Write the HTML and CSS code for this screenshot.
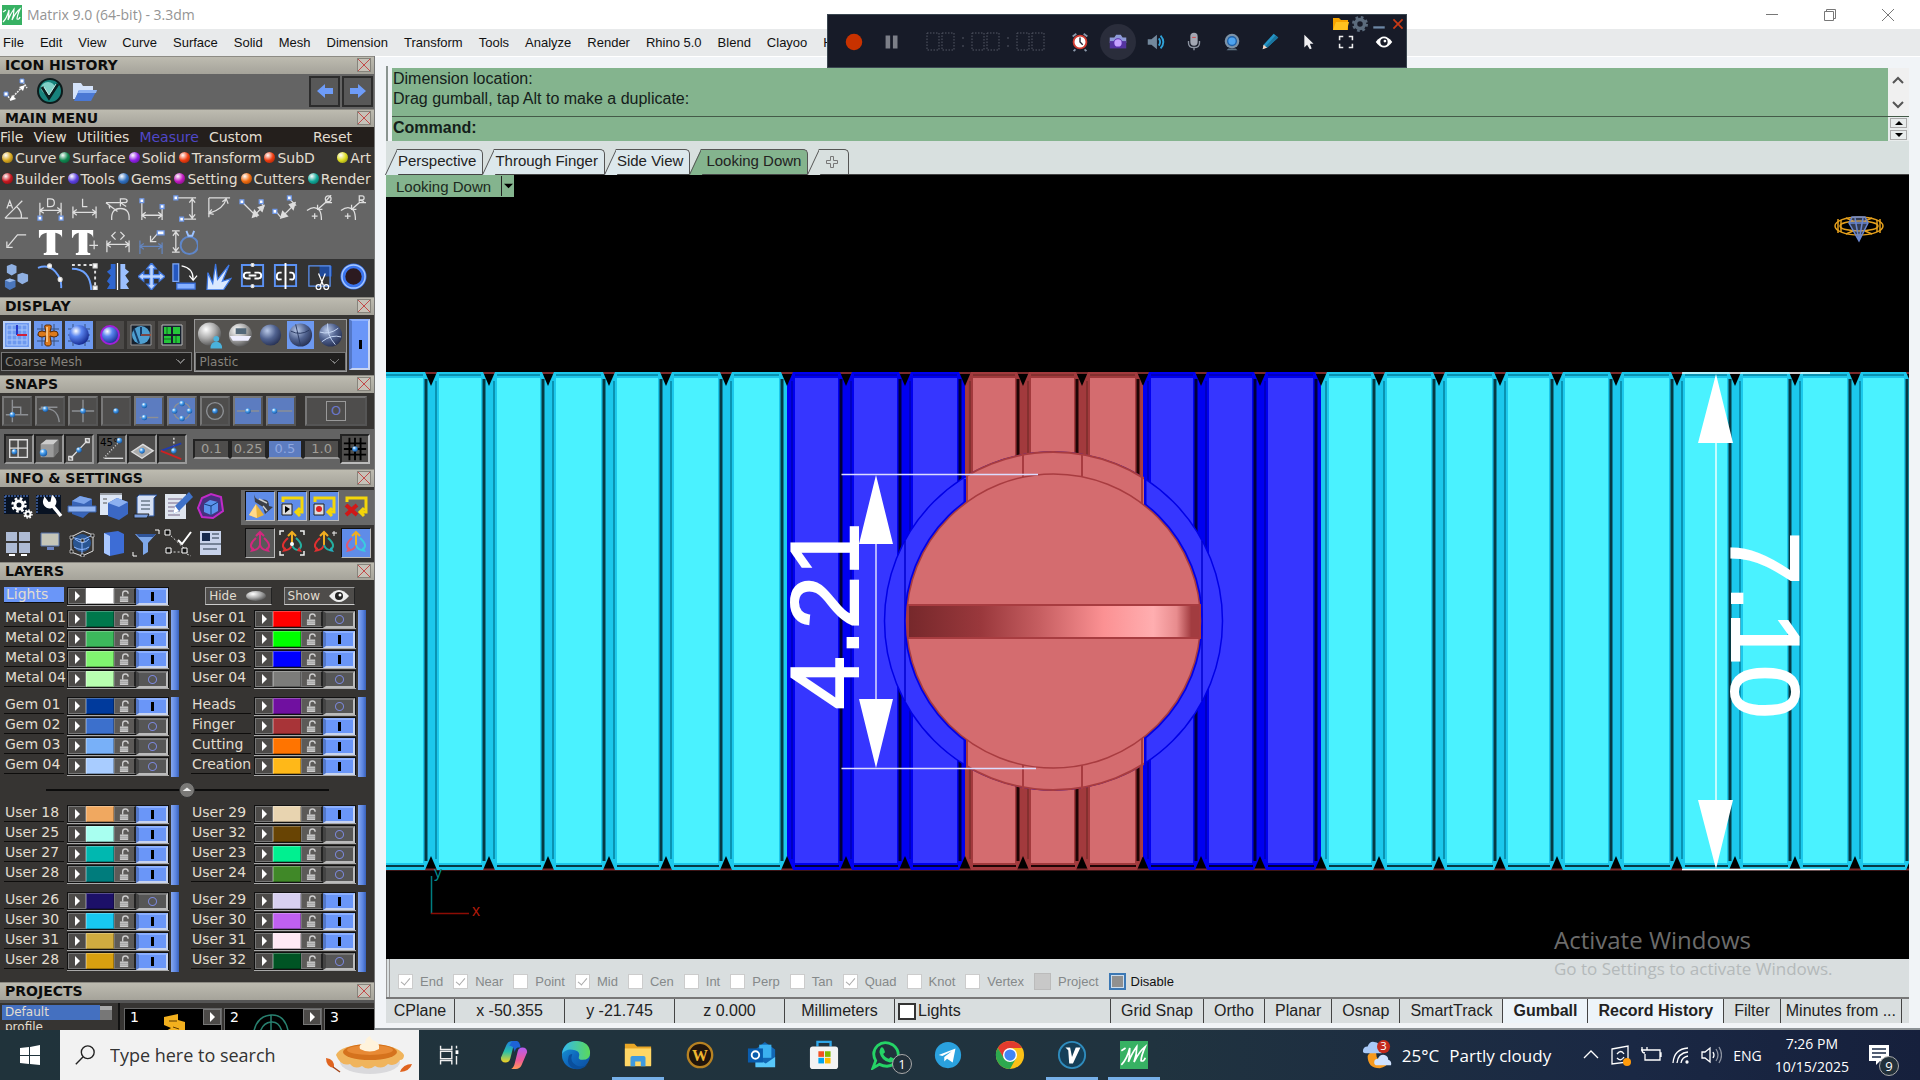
FILE: index.html
```html
<!DOCTYPE html>
<html lang="en">
  <head>
    <meta charset="UTF-8" />
    <meta name="viewport" content="width=device-width, initial-scale=1.0" />
    <title>Matrix 9.0 (64-bit) - 3.3dm</title>

    <link rel="stylesheet" href="styles.css">
  </head>
  <body>
    <!-- shared shapes -->
    <svg class="defs" width="0" height="0" aria-hidden="true">
      <defs>
        <radialGradient id="ballBlue" cx=".35" cy=".3" r=".8"><stop offset="0" stop-color="#fff"/><stop offset=".35" stop-color="#5b86f0"/><stop offset="1" stop-color="#0a1a80"/></radialGradient>
        <radialGradient id="ballSteel" cx=".35" cy=".3" r=".8"><stop offset="0" stop-color="#b9c9e8"/><stop offset=".5" stop-color="#50628f"/><stop offset="1" stop-color="#20294a"/></radialGradient>
        <radialGradient id="ballGray" cx=".35" cy=".3" r=".8"><stop offset="0" stop-color="#fff"/><stop offset=".5" stop-color="#aaa"/><stop offset="1" stop-color="#444"/></radialGradient>
        <radialGradient id="ballSnap" cx=".35" cy=".3" r=".8"><stop offset="0" stop-color="#fff"/><stop offset=".4" stop-color="#4aa0ee"/><stop offset="1" stop-color="#0c4a96"/></radialGradient>
        <linearGradient id="slot">
          <stop offset="0" stop-color="#76282b"/><stop offset=".25" stop-color="#9a383c"/><stop offset=".45" stop-color="#c65e61"/>
          <stop offset=".67" stop-color="#fb9193"/><stop offset=".84" stop-color="#ffaeb0"/><stop offset=".92" stop-color="#e88c8e"/><stop offset=".97" stop-color="#a23c40"/><stop offset="1" stop-color="#a23c40"/>
        </linearGradient>
        <linearGradient id="edgeG" x2="1" y2="1"><stop offset="0" stop-color="#1a9fd8"/><stop offset=".5" stop-color="#0f68bd"/><stop offset="1" stop-color="#0d4f9e"/></linearGradient>
        <linearGradient id="edgeG2" x2="1"><stop offset="0" stop-color="#33b7f0"/><stop offset="1" stop-color="#5bd95a"/></linearGradient>
        <linearGradient id="copA" x2="0" y2="1"><stop offset="0" stop-color="#1c7fe0"/><stop offset=".5" stop-color="#2bc0a8"/><stop offset="1" stop-color="#f5d21f"/></linearGradient>
        <linearGradient id="copB" x2="0" y2="1"><stop offset="0" stop-color="#b35cf0"/><stop offset=".6" stop-color="#ef5a98"/><stop offset="1" stop-color="#ff9a55"/></linearGradient>
        <clipPath id="redZone"><rect x="966" y="376" width="178" height="488"/></clipPath>
        <symbol id="lock" viewBox="0 0 12 14"><path d="M4 7V4q0-3 3-3t3 3" fill="none" stroke="#ccc" stroke-width="1.5"/><path d="M1 7h9v6H1z" fill="#ccc"/><path d="M1 9h9M1 11h9" stroke="#888" stroke-width=".7"/></symbol>
        <symbol id="mlogo" viewBox="0 0 20 20"><path d="M0 0h20v20H0z" fill="#37b163"/><path d="M1 17q4-4 6-12 0 6-1 10 3-7 6-11 0 6-2 11 4-8 8-11-3 7-3 10 2 1 3-2M1 7l3-2" fill="none" stroke="#fff" stroke-width="1.2"/></symbol>
      </defs>
    </svg>

    <header class="titlebar">
      <svg class="logo"><use href="#mlogo"/></svg>
      <span class="title">Matrix 9.0 (64-bit) - 3.3dm</span>
      <div class="win-buttons">
        <button aria-label="Minimize"><svg viewBox="0 0 12 12"><path d="M0 5.5h12"/></svg></button>
        <button aria-label="Restore"><svg viewBox="0 0 12 12"><path d="M.5 2.500h9v9h-9zM2.500 2.500v-2h9v9h-2"/></svg></button>
        <button aria-label="Close"><svg viewBox="0 0 12 12"><path d="m0 0 12 12M12 0 0 12"/></svg></button>
      </div>
    </header>

    <nav class="menubar">
      <button>File</button><button>Edit</button><button>View</button><button>Curve</button><button>Surface</button><button>Solid</button><button>Mesh</button><button>Dimension</button><button>Transform</button><button>Tools</button><button>Analyze</button><button>Render</button><button>Rhino 5.0</button><button>Blend</button><button>Clayoo</button><button>Help</button>
    </nav>

    <!-- screen recorder floating over the window -->
    <div class="recorder">
      <div class="rec-top">
        <svg viewBox="0 0 16 14"><path d="M0 1h6l2 2h7v10H0z" fill="#f5a300"/><path d="M3 5h13l-2 8H0z" fill="#ffc21f"/></svg>
        <svg viewBox="0 0 16 16"><circle cx="8" cy="8" r="4.5" fill="none" stroke="#5b6b7c" stroke-width="3.500"/><circle cx="8" cy="8" r="6.5" fill="none" stroke="#5b6b7c" stroke-width="3" stroke-dasharray="2.600 2.500"/></svg>
        <svg viewBox="0 0 14 14"><path d="M2 10h10" stroke="#6c87a5" stroke-width="2"/></svg>
        <svg viewBox="0 0 14 14"><path d="m3 3 8 8M11 3l-8 8" stroke="#c93a16" stroke-width="1.5"/></svg>
      </div>
      <div class="rec-row">
        <button aria-label="Record"><svg viewBox="0 0 24 24"><circle cx="12" cy="12" r="9" fill="#c83200"/></svg></button>
        <button aria-label="Pause"><svg viewBox="0 0 24 24"><path d="M5 5h5v14H5zM13 5h5v14h-5z" fill="#7c7f88"/></svg></button>
        <svg class="timer" viewBox="0 0 122 20"><path d="M2 1h12v17H2zM17 1h12v17H17zM47 1h12v17H47zM62 1h12v17H62zM92 1h12v17H92zM107 1h12v17h-12z" fill="none" stroke="#555864" stroke-dasharray="1.5 1.5"/><path d="M38 5v2M38 13v2M83 5v2M83 13v2" stroke="#555864"/></svg>
        <button aria-label="Alarm"><svg viewBox="0 0 24 24"><path d="m4 6 4-3M20 6l-4-3M7 20l-2 2M17 20l2 2" stroke="#8c99ab" stroke-width="2"/><circle cx="12" cy="12" r="7" fill="#fff" stroke="#d23b30" stroke-width="2"/><path d="M12 7v5l3 3" fill="none" stroke="#223" stroke-width="1.5"/></svg></button>
        <button class="rec-round" aria-label="Snapshot"><svg viewBox="0 0 24 24"><path d="M3 7h5l2-3h5l2 3h4v6H3z" fill="#8e9ad8"/><path d="M3 11h18v8H3z" fill="#55359f"/><circle cx="12" cy="13" r="5" fill="#5a2fb0"/><circle cx="12" cy="13" r="4" fill="#c7a2ff"/></svg></button>
        <button aria-label="Sound"><svg viewBox="0 0 24 24"><path d="M3 9h4l6-5v16l-6-5H3z" fill="#73889c"/><path d="M15 8q3 4 0 8M17 5q6 7 0 14" fill="none" stroke="#2fa2d8" stroke-width="2"/></svg></button>
        <button aria-label="Microphone"><svg viewBox="0 0 24 24"><rect x="8" y="2" width="8" height="14" rx="4" fill="#a3a7b3"/><path d="M6 11v2q0 5 6 5t6-5v-2M12 18v3" fill="none" stroke="#8d93a1" stroke-width="1.5"/><path d="M10 7h4" stroke="#d44"/></svg></button>
        <button aria-label="Webcam"><svg viewBox="0 0 24 24"><circle cx="12" cy="11" r="8" fill="#7c93a8"/><circle cx="12" cy="11" r="5.5" fill="#1f62aa"/><circle cx="12" cy="11" r="4" fill="#4da4f0"/><path d="M8 19h8l2 2H6z" fill="#5e7484"/></svg></button>
        <button aria-label="Draw"><svg viewBox="0 0 24 24"><path d="m4 20 1-5L16 3l5 4L9 18z" fill="#2595c6"/><path d="m4 20 1-5 4 3z" fill="#ffd5c0"/><path d="m18 5 3 2L9 18l-2-1z" fill="#1b759f"/></svg></button>
        <button aria-label="Pointer"><svg viewBox="0 0 24 24"><path d="M8 4v14l3-3 3 5 2-1-2-5h4z" fill="#f0f0f2"/></svg></button>
        <button aria-label="Full screen"><svg viewBox="0 0 24 24"><path d="M5 10V6h4M15 6h4v4M19 14v4h-4M9 18H5v-4" fill="none" stroke="#eee" stroke-width="1.7"/></svg></button>
        <button aria-label="Preview"><svg viewBox="0 0 24 24"><path d="M3 12q9-12 18 0-9 12-18 0z" fill="#fff"/><circle cx="12" cy="12" r="4" fill="#171b28"/><circle cx="13" cy="11" r="1.5" fill="#fff"/></svg></button>
      </div>
    </div>

    <main class="main">
      <aside class="panel">
        <h2 class="head">ICON HISTORY<button class="close" aria-label="Close"></button></h2>
        <div class="history">
          <svg viewBox="0 0 28 28"><path d="m9 22 12-13M4 17l5 6M21 5l4 6" stroke="#eee" stroke-width="1.5" stroke-dasharray="2 1"/><path d="m8 24 2-6 4 4zM23 8l-6 2 4 4z" fill="#fff"/><path d="M2 15h4v4H2zM18 2h4v4h-4z" fill="#fff" stroke="#5f8be0"/></svg>
          <svg viewBox="0 0 28 28"><circle cx="14" cy="14" r="12" fill="#17837c" stroke="#0c1b1b" stroke-width="2"/><ellipse cx="12" cy="11" rx="7" ry="6" fill="#7fd0c6"/><path d="m6 10 7 11 9-14" fill="none" stroke="#0b2020" stroke-width="3"/><path d="m8 10 5 8 7-11" fill="none" stroke="#bfe8e2"/></svg>
          <svg viewBox="0 0 28 28"><path d="M3 6h8l2 3h10v5H9L5 22H3z" fill="#d5e3fa"/><path d="M9 13h18l-6 11H4z" fill="#4a78d4"/><path d="M9 13h18l-1 3H8z" fill="#8cb2f3"/></svg>
          <div class="arrows">
            <button aria-label="Back"><svg viewBox="0 0 20 20"><path d="m2 10 8-7v4h8v6h-8v4z" fill="#6e9cf8"/></svg></button>
            <button aria-label="Forward"><svg viewBox="0 0 20 20"><path d="m18 10-8-7v4H2v6h8v4z" fill="#6e9cf8"/></svg></button>
          </div>
        </div>

        <h2 class="head">MAIN MENU<button class="close" aria-label="Close"></button></h2>
        <div class="mm-tabs">
          <button>File</button><button>View</button><button>Utilities</button><button class="on">Measure</button><button>Custom</button><button class="last">Reset</button>
        </div>
        <div class="cats">
          <div><button><i class="dot gold"></i>Curve</button><button><i class="dot green"></i>Surface</button><button><i class="dot violet"></i>Solid</button><button><i class="dot red"></i>Transform</button><button><i class="dot red"></i>SubD</button><button class="last"><i class="dot yellow"></i>Art</button></div>
          <div><button><i class="dot crimson"></i>Builder</button><button><i class="dot indigo"></i>Tools</button><button><i class="dot blue"></i>Gems</button><button><i class="dot magenta"></i>Setting</button><button><i class="dot orange"></i>Cutters</button><button><i class="dot teal"></i>Render</button></div>
        </div>

        <div class="tools">
          <svg viewBox="0 0 28 28"><path d="M2 24 20 6M2 24h24M14 12q6 5 5 12"/><path d="m4 14 3-8 3 8M5 11h4"/></svg>
          <svg viewBox="0 0 28 28"><path d="M3 8v14M25 8v14M3 16h22M7 13l-4 3 4 3M21 13l4 3-4 3"/><path d="M11 4h3q4 0 4 4t-4 4h-3z"/><path class="pt" d="M1 22h4v4H1zM23 22h4v4h-4z"/></svg>
          <svg viewBox="0 0 28 28"><path d="M2 12v12M26 12v12M2 18h24M6 15l-4 3 4 3M22 15l4 3-4 3M12 4v8h5"/></svg>
          <svg viewBox="0 0 28 28"><path d="M2 8h14M2 8l12 9M8 26q-1-12 9-12t9 12M17 12V4h4q3 0 3 2t-3 2h-4l6 4M6 14l-1-4"/></svg>
          <svg viewBox="0 0 28 28"><path d="M4 8v18M25 14v12M4 21h21M8 18l-4 3 4 3M21 18l4 3-4 3"/><path class="pt" d="M2 4h4v4H2zM23 10h4v4h-4z"/></svg>
          <svg viewBox="0 0 28 28"><path d="M7 3h19M13 25h13M22 4v20M19 8l3-4 3 4M19 20l3 4 3-4"/><path class="pt" d="M3 1h4v4H3zM9 23h4v4H9z"/></svg>
          <svg viewBox="0 0 28 28"><path d="M4 3h22M4 3v20M22 4q-3 11-18 15M18 7l4-3 2 5M9 20l-5-1 3-4"/></svg>
          <svg viewBox="0 0 28 28"><path d="m4 8 15 15M23 8l3 4M15 22l9-9"/><path d="m14 23 2-7 4 5zM26 11l-6 2 4 4z" fill="#ddd"/><path class="pt" d="M1 5h4v4H1zM21 5h4v4h-4z"/></svg>
          <svg viewBox="0 0 28 28"><path d="m4 17 5 6M18 4l7 7M11 22l11-11"/><path d="m9 24 2-7 5 5zM24 8l-6 2 4 5z" fill="#ddd"/><path class="pt" d="M1 15h4v4H1zM16 1h4v4h-4z"/></svg>
          <svg viewBox="0 0 28 28"><path d="M1 16q8-6 13 0 2 3 2 10M9 19v6M6 22h6M12 15l8-7h7M12 10v5h5"/><circle cx="23" cy="4" r="3"/><path d="m20 7 6-7"/></svg>
          <svg viewBox="0 0 28 28"><path d="M1 16q8-6 13 0 2 3 2 10M8 19v6M5 22h6M12 15l8-7h7M12 10v5h5M20 7V1h3q2 0 2 2t-2 2h-3l5 2"/></svg>
          <svg viewBox="0 0 28 28"><path d="M24 6H15L5 18M4 13v6h6"/></svg>
          <svg viewBox="0 0 28 28"><path d="M2 1h24v8q-1-4-7-5v19q0 2 3 2v2H7v-2q3 0 3-2V4Q4 5 3 9H2z" fill="#fff" stroke="none"/></svg>
          <svg viewBox="0 0 28 28"><path d="M1 1h22v8q-1-4-6-5v19q0 2 3 2v2H5v-2q3 0 3-2V4Q3 5 2 9H1z" fill="#fff" stroke="none"/><path d="M19 17h9M24 12v9"/></svg>
          <svg viewBox="0 0 28 28"><path d="M3 12v12M26 12v12M3 16h23M7 13l-4 3 4 3M22 13l4 3-4 3M12 3 8 7l4 4M17 3l4 4-4 4"/></svg>
          <svg viewBox="0 0 28 28"><path d="M2 12v14M25 14v12M2 18h23M6 15l-4 3 4 3M21 15l4 3-4 3" stroke="#6485bd"/><path d="m20 5-6 7M13 7v6h6"/><path class="pt" d="M20 2h7v4h-7z"/></svg>
          <svg viewBox="0 0 28 28"><path d="M1 2h8M1 24h8M5 3v20M2 7l3-4 3 4M2 19l3 4 3-4"/><circle cx="19" cy="17" r="9" stroke="#5f86c8" stroke-width="2"/><path d="m16 2 2 5h4l2-5" stroke="#9cc2ff" stroke-width="2"/></svg>
        </div>

        <div class="tools edit">
          <svg viewBox="0 0 28 28"><g stroke="none"><path d="m4 3 5-2 5 2v7l-5 3-5-3zM15 12l5-2 6 2v7l-6 3-5-3z" fill="#8fb0e2"/><path d="m2 18 5-2 6 2v7l-6 3-5-3z" fill="#4a76bb"/><path d="m2 18 5 2 6-2-6-2z" fill="#9bb9e8"/></g></svg>
          <svg viewBox="0 0 28 28"><path d="M1 5q11-4 18 4t6 17" stroke="#6da2ff" stroke-width="2"/><circle cx="13" cy="3" r="2" fill="#fff"/><circle cx="24" cy="17" r="2" fill="#fff"/></svg>
          <svg viewBox="0 0 28 28"><path d="M1 6q19 0 20 22" stroke="#6da2ff" stroke-width="2"/><path d="M1 2h24v24" stroke-dasharray="3 3" stroke-width="2"/><path d="M23 1h4v4h-4zM23 24h4v4h-4z" fill="#fff"/></svg>
          <svg viewBox="0 0 28 28"><path d="M12 1v26H3l3-5-3-3 4-6-4-4 4-3V1z" fill="#2f66d0" stroke="none"/><path d="M17 1v26h9l-3-5 3-3-4-6 4-4-4-3V1z" fill="#9cc0ff" stroke="none"/><path d="M14 0v28" stroke="#fff"/></svg>
          <svg viewBox="0 0 28 28"><path d="m14 0 5 6h-3v6h6V9l6 5-6 5v-3h-6v6h3l-5 6-5-6h3v-6H6v3l-6-5 6-5v3h6V6H9z" fill="#bcd5ff" stroke="#3f77e0"/></svg>
          <svg viewBox="0 0 28 28"><path d="M2 1h6v18H2z" fill="#2457c0" stroke="#7da7f5"/><path d="M6 21h19v6H6z" fill="#86b0ff" stroke="#386dd8"/><path d="M11 3q12 2 12 14M19 13l4 5 4-5" stroke="#fff"/></svg>
          <svg viewBox="0 0 28 28"><path d="m2 28 1-18 5 11 3-20 2 16L25 2l-7 17 9-3-8 12z" fill="#d9e8ff" stroke="#3e78e4"/></svg>
          <svg viewBox="0 0 28 28"><path d="M3 2h22v22H3z" stroke="#5b92f5" stroke-width="2"/><path d="M12 10H8q-3 0-3 3t3 3h4M16 10h4q3 0 3 3t-3 3h-4M10 13h8" stroke="#fff" stroke-width="2"/><circle cx="14" cy="2" r="1.5" fill="#fff"/><circle cx="14" cy="24" r="1.5" fill="#fff"/></svg>
          <svg viewBox="0 0 28 28"><path d="M3 2h22v22H3z" stroke="#5b92f5" stroke-width="2"/><path d="M10 10H8q-3 0-3 4t3 3h2M18 10h2q3 0 3 4t-3 3h-2M14 0v27" stroke="#fff" stroke-width="2"/></svg>
          <svg viewBox="0 0 28 28"><path d="M14 3h13v11H14z" fill="#204a9a" stroke="none"/><path d="M3 3h22v21H3z" stroke="#5b92f5"/><path d="m13 11 5 12M20 11l-5 12" stroke="#fff"/><circle cx="13" cy="25" r="2.5" stroke="#fff"/><circle cx="21" cy="25" r="2.5" stroke="#fff"/></svg>
          <svg viewBox="0 0 28 28"><circle cx="14" cy="14" r="11" fill="#2c1a20" stroke="#3a74ee" stroke-width="5"/><circle cx="14" cy="14" r="12" stroke="#a8c9ff" stroke-width="1.5"/></svg>
        </div>

        <h2 class="head">DISPLAY<button class="close" aria-label="Close"></button></h2>
        <div class="display">
          <div class="disp-col">
            <div class="disp-icons">
              <button class="on lit" aria-label="Grid"><svg viewBox="0 0 28 28"><path d="M4 4v20h20M9 4v20M14 4v20M19 4v20M24 4v20M4 4h20M4 9h20M4 14h20M4 19h20" fill="none" stroke="#a9c6fa"/><path d="M14 4v10" stroke="#2536c8" stroke-width="2"/><path d="M14 14h10" stroke="#d02038" stroke-width="2"/></svg></button>
              <button class="on" aria-label="Axes"><svg viewBox="0 0 28 28"><path d="M3 8h22M3 14h22M3 20h22M8 3v22M20 3v22" stroke="#38507c"/><path d="M12 4h4q2 0 1 3l-1 4 4-1q4 0 4 3t-4 3l-4-1 1 6q1 4-3 4t-3-4l1-6-4 1q-4 0-4-3t4-3l4 1-1-4q-1-3 1-3z" fill="#dd7a1c" stroke="#5c2b05"/><path d="M13 6v15" fill="none" stroke="#ffd9a0" stroke-width="1.5"/></svg></button>
              <button class="on" aria-label="Shade"><svg viewBox="0 0 28 28"><path d="M3 8h22M3 14h22M3 20h22M8 3v22M20 3v22" stroke="#38507c"/><circle cx="14" cy="14" r="10" fill="url(#ballBlue)"/></svg></button>
              <button aria-label="Outline"><svg viewBox="0 0 28 28"><circle cx="14" cy="14" r="9" fill="url(#ballBlue)" stroke="#a020d8" stroke-width="2"/></svg></button>
              <button aria-label="Environment"><svg viewBox="0 0 28 28"><path d="M4 4h20v20H4z" fill="#16202e" stroke="#999"/><circle cx="14" cy="14" r="9" fill="#4e9fd0"/><path d="M14 6v8h9M7 8l5 14" fill="none" stroke="#173c66" stroke-width="2"/><path d="M14 14h10" stroke="#e05020"/></svg></button>
              <button aria-label="Views"><svg viewBox="0 0 28 28"><path d="M4 4h20v20H4z" fill="#16202e" stroke="#bbb"/><path d="M6 6h7v7H6zM15 6h7v7h-7zM6 15h7v7H6zM15 15h7v7h-7z" fill="#25c63a"/><path d="M9 6v7M18 15v7M6 18h7" stroke="#0a6a1a"/></svg></button>
            </div>
            <select aria-label="Mesh"><option>Coarse Mesh</option></select>
          </div>
          <div class="disp-col mat">
            <div class="disp-icons">
              <button aria-label="User material"><svg viewBox="0 0 28 28"><circle cx="13" cy="13" r="12" fill="url(#ballGray)"/><circle cx="20" cy="18" r="3" fill="#4ab2dc"/><path d="M14 28q0-7 6-7t6 7z" fill="#4ab2dc"/></svg></button>
              <button aria-label="Reflective"><svg viewBox="0 0 28 28"><circle cx="14" cy="14" r="12" fill="url(#ballGray)"/><path d="M9 7h11v6H9z" fill="#536879"/><path d="M3 15h22l-3 5H6z" fill="#eef"/></svg></button>
              <button aria-label="Smooth"><svg viewBox="0 0 28 28"><circle cx="14" cy="14" r="11" fill="url(#ballSteel)"/></svg></button>
              <button class="on" aria-label="Seams"><svg viewBox="0 0 28 28"><circle cx="14" cy="14" r="12" fill="url(#ballSteel)"/><path d="M4 10q10 5 19-1M9 3l5 22" fill="none" stroke="#2b3a62"/></svg></button>
              <button aria-label="Wires"><svg viewBox="0 0 28 28"><circle cx="14" cy="14" r="12" fill="url(#ballSteel)"/><path d="M3 11q10 3 19-4M11 2q-1 12 8 22M5 21q10-8 20-5" fill="none" stroke="#c8d8f5"/></svg></button>
            </div>
            <select aria-label="Material"><option>Plastic</option></select>
          </div>
          <button class="toggle tall" aria-label="Material on"></button>
        </div>

        <h2 class="head">SNAPS<button class="close" aria-label="Close"></button></h2>
        <div class="snaps">
          <button aria-label="Perpendicular"><svg viewBox="0 0 28 28"><path d="M9 2v24M2 18h24M9 10h9v8"/><circle cx="9" cy="18" r="3"/></svg></button>
          <button aria-label="Tangent"><svg viewBox="0 0 28 28"><path d="M2 12q20-4 22 14M4 10h18"/><circle cx="9" cy="12" r="3"/></svg></button>
          <button aria-label="Intersection"><svg viewBox="0 0 28 28"><path d="M14 2v24M2 14h24"/><circle cx="14" cy="14" r="3"/></svg></button>
          <button aria-label="Point"><svg viewBox="0 0 28 28"><circle cx="14" cy="14" r="3"/></svg></button>
          <button class="on" aria-label="Near"><svg viewBox="0 0 28 28"><path d="M4 21h20"/><circle cx="9" cy="8" r="3"/><circle cx="9" cy="21" r="3"/></svg></button>
          <button class="on" aria-label="Quad"><svg viewBox="0 0 28 28"><circle class="ring" cx="14" cy="14" r="9"/><circle cx="14" cy="6" r="3"/><circle cx="6" cy="14" r="3"/><circle cx="22" cy="14" r="3"/><circle cx="14" cy="22" r="3"/></svg></button>
          <button aria-label="Center"><svg viewBox="0 0 28 28"><circle class="ring" cx="14" cy="14" r="9"/><circle cx="14" cy="14" r="3"/></svg></button>
          <button class="on" aria-label="Mid"><svg viewBox="0 0 28 28"><path d="M2 14h24"/><circle cx="14" cy="14" r="3"/></svg></button>
          <button class="on" aria-label="End"><svg viewBox="0 0 28 28"><path d="M4 14h22"/><circle cx="7" cy="14" r="3"/></svg></button>
          <button class="snap-all"><span>O</span></button>
        </div>
        <div class="snaps second">
          <div class="trio">
            <button aria-label="Grid snap"><svg viewBox="0 0 28 28"><path d="M4 4h19v19H4zM13 4v19M4 13h19"/><circle cx="9" cy="17" r="3"/></svg></button>
            <button aria-label="Solid snap"><svg viewBox="0 0 28 28"><g stroke="none"><path d="m5 9 6-5h13v13l-5 6H5z" fill="#9b9b9b"/><path d="m5 9 6-5h13l-5 5z" fill="#ccc"/><path d="m19 9 5-5v13l-5 6z" fill="#777"/></g><circle cx="8" cy="18" r="4"/></svg></button>
            <button aria-label="Line snap"><svg viewBox="0 0 28 28"><path d="M5 24 23 5M3 22h4v4H3zM21 3h4v4h-4z"/><circle cx="14" cy="15" r="3"/></svg></button>
          </div>
          <div class="trio">
            <button aria-label="Angle"><svg viewBox="0 0 28 28"><text x="1" y="11" font-size="11">45°</text><path d="M5 24 22 6" stroke-dasharray="1 2"/><path d="M6 24h20"/><circle cx="22" cy="5" r="3"/></svg></button>
            <button aria-label="Planar"><svg viewBox="0 0 28 28"><path d="m3 17 12-8 11 7-12 8z" fill="#aaa"/><circle cx="14" cy="16" r="3"/></svg></button>
            <button aria-label="Track"><svg viewBox="0 0 28 28"><path d="M16 2v14" stroke-dasharray="2 2"/><path class="b" d="M2 16 24 8"/><path class="r" d="m2 16 22 9"/><circle cx="16" cy="16" r="3"/></svg></button>
          </div>
          <div class="steps"><button>0.1</button><button>0.25</button><button class="on">0.5</button><button>1.0</button></div>
          <button class="grid" aria-label="Grid"><svg viewBox="0 0 28 28"><path d="M8 2v24M14 2v24M20 2v24M2 8h24M2 14h24M2 20h24"/><circle cx="14" cy="14" r="3"/></svg></button>
        </div>

        <h2 class="head">INFO &amp; SETTINGS<button class="close" aria-label="Close"></button></h2>
        <div class="info">
          <div class="info-left">
            <svg viewBox="0 0 30 28"><path d="M1 3h25v19H1z" fill="#081222"/><path d="M2 4h24M2 4v18" stroke="#5d8be5" stroke-dasharray="2 1"/><circle cx="16" cy="13" r="4" fill="none" stroke="#fff" stroke-width="3"/><circle cx="16" cy="13" r="6.5" fill="none" stroke="#fff" stroke-width="2.5" stroke-dasharray="2.600 2.500"/><circle cx="25" cy="22" r="2.5" fill="none" stroke="#fff" stroke-width="2"/><circle cx="25" cy="22" r="4" fill="none" stroke="#fff" stroke-width="1.5" stroke-dasharray="1.6 1.5"/></svg>
            <svg viewBox="0 0 30 28"><path d="M1 3h25v19H1z" fill="#081222"/><path d="M2 4h24M2 4v18" stroke="#5d8be5" stroke-dasharray="2 1"/><path d="M10 8a5 5 0 1 0 8-2l-1 5-4 1zM17 13l9 11" stroke="#fff" stroke-width="3.5" fill="none"/></svg>
            <svg viewBox="0 0 30 28"><path d="m5 9 8-5 12 3v11l-9 8-11-4z" fill="#3864b8"/><path d="m5 9 8-5 12 3-8 5z" fill="#7ca4ea"/><path d="M1 14h28v6H1z" fill="#93b5f0" stroke="#375ea8"/></svg>
            <svg viewBox="0 0 30 28"><path d="M1 1h22v22H1z" fill="#dde6f5"/><path d="M1 2h22M4 7h4M4 11h4" stroke="#555"/><path d="m9 11 9-5 11 4v12l-9 6-11-4z" fill="#3b68c4"/><path d="m9 11 9-5 11 4-9 5z" fill="#8cb0f0"/></svg>
            <svg viewBox="0 0 30 28"><path d="M8 3h18l-3 3v18H6V5z" fill="#d6e0f4" stroke="#2752a0"/><path d="M10 9h9M10 13h9M10 17h9" stroke="#345"/><path d="M3 22h15l-2 4H3z" fill="#789de0" stroke="#222"/></svg>
            <svg viewBox="0 0 30 28"><path d="M2 2h21v25H2z" fill="#dfe5ee"/><path d="M5 7h14M5 11h14M5 15h8M5 19h12M5 23h12" stroke="#768"/><path d="m10 22 2-8L26 0l4 5-14 14z" fill="#3f72c8"/><path d="m10 22 2-8 4 5z" fill="#fff"/></svg>
            <svg viewBox="0 0 30 28"><path d="m3 16 4-10 9-4 10 3 2 14-10 7-11-1z" fill="#48307e" stroke="#c12ac8" stroke-width="2"/><path d="m9 12 6-4 8 2v9l-7 4-7-3z" fill="#5a92ec"/><path d="m9 12 7 2v9M16 14l7-4" fill="none" stroke="#153c78"/></svg>
            <svg viewBox="0 0 30 28"><path d="M3 3h11v9H3zM16 3h11v9H16zM3 14h11v10H3zM16 14h11v10H16z" fill="#aebbd4"/><path d="M6 26h6M18 26h6" stroke="#fff" stroke-width="2"/></svg>
            <svg viewBox="0 0 30 28"><path d="M6 4h18v13H6z" fill="#c5c5b8" stroke="#5471a8"/><path d="M12 18h7v3h-7z" fill="#6a82c0"/></svg>
            <svg viewBox="0 0 30 28"><path d="m4 8 12-6 10 4v16l-11 5-11-4z" fill="none" stroke="#ddd"/><circle cx="15" cy="14" r="9" fill="#2a5590"/><path d="m4 8 11 3v16M15 11l11-5M8 10q8 7 14 0M7 18q8 5 15 0" fill="none" stroke="#8fb8ff"/><path d="M3 7h3v3H3zM14 10h3v3h-3zM24 5h3v3h-3zM14 25h3v3h-3zM3 21h3v3H3z" fill="#111" stroke="#ddd" stroke-width=".7"/></svg>
            <svg viewBox="0 0 30 28"><path d="m5 4 14-2 6 3v19l-14 3-6-3z" fill="#3d6dd6"/><path d="m5 4 6 3v20l-6-3z" fill="#a9c7ff"/></svg>
            <svg viewBox="0 0 30 28"><path d="M4 5h21l-8 9v9l-5 3V14z" fill="#7ea8ea"/><path d="M5 5h20l-3 3H8z" fill="#30559a"/><path d="M24 1h4v4M2 23v4h4" fill="none" stroke="#fff"/></svg>
            <svg viewBox="0 0 30 28"><path d="m5 4 20 19H6M24 25l4 2" fill="none" stroke="#ddd" stroke-dasharray="2 2"/><path d="M2 1h5v5H2zM3 19h5v5H3zM19 19h5v5h-5z" fill="#111" stroke="#fff"/><path d="m15 11 4 4 9-12" fill="none" stroke="#fff" stroke-width="2"/></svg>
            <svg viewBox="0 0 30 28"><path d="M5 2h21v24H5z" fill="#c8d3ea"/><path d="M7 4h8v8H7z" fill="#172a4c"/><path d="M17 5h7M17 9h7M5 15h21M8 20h14" stroke="#234"/></svg>
          </div>
          <div class="info-right">
            <button class="on" aria-label="Cleanup"><svg viewBox="0 0 28 28"><path d="m3 23 7-11 8 11-7 3z" fill="#e8b33c"/><path d="m3 23 7-11 1 14z" fill="#ffd98a"/><path d="M8 2q1 6 7 6 8-2 8 6l4 1-8 7-2-7-8-5z" fill="#3c3f48"/><path d="m13 7 8 4M17 14l4 5" stroke="#ccc" stroke-width="1.5"/></svg></button>
            <button class="on" aria-label="Play history"><svg viewBox="0 0 28 28"><path d="M5 10V6h19v14h-5M22 16l-4 4 4 4" fill="none" stroke="#f4d60a" stroke-width="3"/><path d="M4 12h10v11H4z" fill="#ddd" stroke="#222"/><path d="m7 14 5 3-5 4z"/></svg></button>
            <button class="on" aria-label="Record history"><svg viewBox="0 0 28 28"><path d="M5 10V6h19v14h-5M22 16l-4 4 4 4" fill="none" stroke="#f4d60a" stroke-width="3"/><path d="M4 12h10v11H4z" fill="#ddd" stroke="#222"/><circle cx="9" cy="17" r="3" fill="#d22"/></svg></button>
            <button class="flat" aria-label="Purge history"><svg viewBox="0 0 28 28"><path d="M5 10V6h19v14h-5M22 16l-4 4 4 4" fill="none" stroke="#f4d60a" stroke-width="3"/><path d="m4 13 11 10M15 13 4 23" stroke="#d01818" stroke-width="4"/></svg></button>
            <button aria-label="Gumball off"><svg viewBox="0 0 28 28"><path d="M14 16V4M10 7l4-4 4 4M10 9q-9 8-2 12 4 0 6-5M18 9q9 8 2 12-4 0-6-5" fill="none" stroke="#d2287e" stroke-width="2"/><path d="m4 23 5-1-2-4zM24 23l-5-1 2-4z" fill="#d2287e"/></svg></button>
            <button class="flat" aria-label="Gumball bounds"><svg viewBox="0 0 28 28"><path d="M2 6V2h4M22 2h4v4M26 22v4h-4M6 26H2v-4" fill="none" stroke="#eee" stroke-width="1.5"/><path d="M14 16V4M10 7l4-4 4 4" fill="none" stroke="#f0ae20" stroke-width="2"/><path d="M10 9q-9 8-2 12 4 0 6-5" fill="none" stroke="#e03030" stroke-width="2"/><path d="M18 9q9 8 2 12-4 0-6-5" fill="none" stroke="#24b0a0" stroke-width="2"/><path d="m4 23 5-1-2-4zM24 23l-5-1 2-4z" fill="#e03030"/><circle cx="14" cy="15" r="2" fill="#fff"/></svg></button>
            <button class="flat" aria-label="Gumball add"><svg viewBox="0 0 28 28"><path d="M14 16V4M10 7l4-4 4 4" fill="none" stroke="#f0ae20" stroke-width="2"/><path d="M10 9q-9 8-2 12 4 0 6-5" fill="none" stroke="#e03030" stroke-width="2"/><path d="M18 9q9 8 2 12-4 0-6-5" fill="none" stroke="#24b0a0" stroke-width="2"/><path d="m4 23 5-1-2-4z" fill="#e03030"/><path d="m24 23-5-1 2-4z" fill="#24b0c0"/><path d="M22 4h5M24 2v5" stroke="#eee"/></svg></button>
            <button class="on lit" aria-label="Gumball"><svg viewBox="0 0 28 28"><path d="M14 16V4M10 7l4-4 4 4" fill="none" stroke="#f0ae20" stroke-width="2"/><path d="M10 9q-9 8-2 12 4 0 6-5" fill="none" stroke="#e05a70" stroke-width="2"/><path d="M18 9q9 8 2 12-4 0-6-5" fill="none" stroke="#3acbe0" stroke-width="2"/><path d="m4 23 5-1-2-4z" fill="#e05a70"/><path d="m24 23-5-1 2-4z" fill="#3acbe0"/></svg></button>
          </div>
        </div>

        <h2 class="head">LAYERS<button class="close" aria-label="Close"></button></h2>
        <div class="layers">
          <div class="layers-top">
            <div id="lights"></div>
            <div class="show-hide">
              <button>Hide <svg viewBox="0 0 22 14"><ellipse cx="11" cy="7" rx="10" ry="5" fill="url(#ballGray)"/></svg></button>
              <button>Show <svg viewBox="0 0 22 14"><path d="M1 7q10-12 20 0-10 12-20 0z" fill="#eee"/><circle cx="11" cy="7" r="4" fill="#222"/><circle cx="12" cy="6" r="1.5" fill="#fff"/></svg></button>
            </div>
          </div>
          <div class="groups" id="mainLayers"></div>
          <div class="divider"><button aria-label="Collapse"><svg viewBox="0 0 16 16"><path d="m3 9 5-4 5 4z" fill="#eee"/></svg></button></div>
          <div class="groups" id="userLayers"></div>
        </div>

        <h2 class="head">PROJECTS<button class="close" aria-label="Close"></button></h2>
        <div class="projects">
          <ul class="profile"><li>Default<br>profile</li></ul>
          <div class="profile-bar"><i></i></div>
          <div class="project">1<svg viewBox="0 0 40 28"><path d="m13 8 14-3v6l7 2v15H17l-2-6 5-3-7-3z" fill="#f2b01e"/><path d="M18 12h8M22 18l6 2" stroke="#5d3a00"/></svg><button class="play" aria-label="Open 1"></button></div>
          <div class="project">2<svg viewBox="0 0 40 28"><path d="M2 28Q4 7 20 6t18 22M8 28q2-14 12-15t12 15M20 6v20" fill="none" stroke="#28806f" stroke-width="1.5"/></svg><button class="play" aria-label="Open 2"></button></div>
          <div class="project">3</div>
        </div>
      </aside>

      <section class="work">
        <div class="command">
          <div class="log">
            <p>Dimension location:<br>Drag gumball, tap Alt to make a duplicate:</p>
            <div class="scroll"><svg viewBox="0 0 12 8"><path d="m1 7 5-5 5 5"/></svg><svg viewBox="0 0 12 8"><path d="m1 1 5 5 5-5"/></svg></div>
          </div>
          <div class="prompt">
            <label for="cmd">Command:</label><input type="text" id="cmd" />
            <div class="spin"><button aria-label="Previous"><svg viewBox="0 0 8 6"><path d="m0 5 4-4 4 4z"/></svg></button><button aria-label="Next"><svg viewBox="0 0 8 6"><path d="m0 1 4 4 4-4z"/></svg></button></div>
          </div>
        </div>

        <div class="view-tabs">
          <button>Perspective</button><button>Through Finger</button><button>Side View</button><button class="on">Looking Down</button><button class="add" aria-label="New view"><svg viewBox="0 0 12 12"><path d="M4.5.5h3v4h4v3h-4v4h-3v-4h-4v-3h4z" fill="none" stroke="#777"/></svg></button>
        </div>

        <div class="viewport">
          <svg class="scene" viewBox="386 174 1523 784" preserveAspectRatio="xMidYMid slice">
            <path d="M386 372h1523M386 868.500h1523" stroke="#7c2a2c" stroke-width="2"/>
            <g id="links"></g>
            <circle cx="1053.500" cy="620" r="169" fill="#3636ff" stroke="#0000e6" stroke-width="1.5"/>
            <path d="M905 540v160M1202 540v160" stroke="#0000d0" stroke-width="1.5"/>
            <path d="M965 478v290M1145 478v290" stroke="#0000e6" stroke-width="3"/>
            <circle cx="1053.500" cy="620" r="148" fill="none" stroke="#0000e6" stroke-width="3"/>
            <g clip-path="url(#redZone)">
              <circle cx="1053.500" cy="620" r="169" fill="#d46c6f" stroke="#a83c40" stroke-width="2"/>
              <path d="M967 384v472M1142 384v472M1023 453v335M1082 453v335" stroke="#a83c40" stroke-width="2"/>
            </g>
            <circle cx="1053.500" cy="620" r="147" fill="#d46c6f" stroke="#a83c40" stroke-width="1.5"/>
            <path d="M908 604h292v33H908z" fill="url(#slot)" stroke="#a83c40" stroke-width="2"/>

            <g class="dim">
              <path d="M841.500 473.500H1038M841.500 767.500H1036M876 540v160" stroke="#dcdcff" stroke-width="1.5"/>
              <path d="m876 474 17 69h-34zM876 767l17-69h-34z" fill="#fff"/>
              <text transform="translate(858 615) rotate(-90)" text-anchor="middle">4.21</text>
              <path d="M1682 372h148M1682 868.500h148M1716 440v360" stroke="#eaffff" stroke-width="1.5"/>
              <path d="m1716 373 17 69h-35zM1716 868l17-69h-35z" fill="#fff"/>
              <text transform="translate(1732 624) rotate(90)" text-anchor="middle">7.10</text>
            </g>

            <path d="M431.500 875v38" stroke="#007d80" stroke-width="1.5"/>
            <path d="M431 912.500h38" stroke="#8c0c04" stroke-width="1.5"/>
            <text class="axis" x="472" y="915" fill="#b01a0a">x</text>
            <text class="axis" x="434" y="877" fill="#008c90">y</text>
            <g fill="none" stroke="#e5a01c" stroke-width="1.5"><ellipse cx="1859" cy="225" rx="24" ry="9"/><ellipse cx="1859" cy="225" rx="19" ry="5"/><path d="M1838 218v14M1841 219v12M1877 219v12M1880 218v14M1846 217l7 3M1872 217l-7 3M1846 233l7-3M1872 233l-7-3"/></g>
            <path d="m1852 216-3 6 10 18 9-18-3-6zM1849 222h19M1855 217l4 23 4-23" fill="#8094c866" stroke="#6a86cf" stroke-width="1.5"/>
          </svg>
          <button class="view-title"><span>Looking Down</span><svg viewBox="0 0 8 6"><path d="m0 1 4 4 4-4z"/></svg></button>
        </div>

        <div class="osnaps">
          <label><input type="checkbox" checked />End</label>
          <label><input type="checkbox" checked />Near</label>
          <label><input type="checkbox" />Point</label>
          <label><input type="checkbox" checked />Mid</label>
          <label><input type="checkbox" />Cen</label>
          <label><input type="checkbox" />Int</label>
          <label><input type="checkbox" />Perp</label>
          <label><input type="checkbox" />Tan</label>
          <label><input type="checkbox" checked />Quad</label>
          <label><input type="checkbox" />Knot</label>
          <label><input type="checkbox" />Vertex</label>
          <label><input type="checkbox" class="gray" />Project</label>
          <label class="active"><input type="checkbox" class="gray" />Disable</label>
        </div>

        <footer class="status">
          <button class="cplane">CPlane</button><button class="coord">x -50.355</button><button class="coord">y -21.745</button><button class="coord">z 0.000</button><button class="coord">Millimeters</button><button class="current"><i></i>Lights</button>
          <button>Grid Snap</button><button>Ortho</button><button>Planar</button><button>Osnap</button><button>SmartTrack</button><button class="on">Gumball</button><button class="on">Record History</button><button>Filter</button><button class="tight">Minutes from ...</button>
        </footer>
      </section>
    </main>

    <div class="activate"><strong>Activate Windows</strong><span>Go to Settings to activate Windows.</span></div>

    <div class="taskbar">
      <button class="start" aria-label="Start"><svg viewBox="0 0 20 20"><path d="m0 3 9-1v8H0zM10 2l10-2v10H10zM0 11h9v8l-9-1zM10 11h10v9l-10-1z" fill="#fff"/></svg></button>
      <div class="search">
        <svg class="glass" viewBox="0 0 24 24"><circle cx="15" cy="9" r="7" fill="none" stroke="#222" stroke-width="1.5"/><path d="m10 14-8 8" stroke="#222" stroke-width="1.5"/></svg>
        <input type="text" aria-label="Search" placeholder="Type here to search" />
        <svg class="pie" viewBox="0 0 92 40"><ellipse cx="48" cy="27" rx="30" ry="12" fill="#d9d9dc"/><path d="M14 20q4-10 34-11 28 1 34 11 0 5-4 5-5 7-12 4-6 6-13 2-7 5-13 0-7 4-12-2-9 3-14-9z" fill="#f0b45c"/><ellipse cx="48" cy="17" rx="27" ry="8" fill="#d5721d"/><ellipse cx="48" cy="15" rx="23" ry="5" fill="#e88a35"/><path d="M38 14q-2-5 5-6 0-5 5-7 1 4 5 5 5 2 4 8-9 5-19 0z" fill="#fff3dc"/><path d="M4 23q9 1 8 10-8-1-8-10z" fill="#e0641f"/><path d="m11 32 7 5" stroke="#a3441a" stroke-width="1.5"/><path d="M78 37q3-8 12-8-2 7-12 8z" fill="#e0641f"/></svg>
      </div>
      <div class="apps">
        <button aria-label="Task view"><svg viewBox="0 0 32 32"><path d="M7 6v4h12V6M7 26v-4h12v4M7 12h12v8H7zM24 6v3M24 17v9" fill="none" stroke="#eee" stroke-width="1.5"/><path d="M23 11h3v4h-3z" fill="#fff"/></svg></button>
        <button aria-label="Copilot"><svg viewBox="0 0 32 32"><path d="M8 5q2-4 6-4h5q-3 2-4 7l-3 12q-1 4-5 4-5 0-5-5z" fill="url(#copA)"/><path d="M24 27q-2 4-6 4h-5q3-2 4-7l3-12q1-4 5-4 5 0 5 5z" fill="url(#copB)"/><path d="M14 1h5q3 0 4 7h-3q-3 1-3 5l-1-3q-1-4-5-4z" fill="#1d63d8"/></svg></button>
        <button aria-label="Edge"><svg viewBox="0 0 32 32"><circle cx="16" cy="16" r="15" fill="url(#edgeG)"/><path d="M1 15Q3 1 17 1q14 1 14 13 0 7-8 7-5 0-4-3 2-5-4-7Q6 8 1 15z" fill="url(#edgeG2)"/><path d="M12 15q-3 8 4 12 6 3 12-1-5 6-13 5Q5 27 8 18q1-3 4-3z" fill="#0a4f9c"/></svg></button>
        <button class="run" aria-label="Explorer"><svg viewBox="0 0 32 32"><path d="M2 4h10l3 3h15v20H2z" fill="#e8a626"/><path d="M2 9h28v19H2z" fill="#ffd766"/><path d="M8 28v-9q0-2 2-2h12q2 0 2 2v9h-5v-5h-6v5z" fill="#3f9be0"/></svg></button>
        <button aria-label="Warcraft"><svg viewBox="0 0 32 32"><circle cx="16" cy="16" r="13" fill="#20150c" stroke="#b78222" stroke-width="2.5"/><text class="w" x="16" y="22" text-anchor="middle">W</text></svg></button>
        <button aria-label="Outlook"><svg viewBox="0 0 32 32"><path d="m9 10 10-8 11 8v18H9z" fill="#1267b4"/><path d="M13 5h13v14H13z" fill="#3bb0f0"/><path d="m9 19 11 6 10-7v11H9z" fill="#58c8fa"/><path d="M1 9h16v15H1z" fill="#0a5cad"/><circle cx="9" cy="16" r="4" fill="none" stroke="#fff" stroke-width="2"/></svg></button>
        <button aria-label="Store"><svg viewBox="0 0 32 32"><path d="M9 7V2h14v5" fill="none" stroke="#2fa6e8" stroke-width="2.5"/><rect x="1" y="7" width="30" height="24" rx="3" fill="#f3f3f3"/><path d="M10 12h6v6h-6z" fill="#f25022"/><path d="M17 12h6v6h-6z" fill="#7fba00"/><path d="M10 19h6v6h-6z" fill="#00a4ef"/><path d="M17 19h6v6h-6z" fill="#ffb900"/></svg></button>
        <button aria-label="WhatsApp"><svg viewBox="0 0 32 32"><path d="m2 30 3-8q-5-9 2-16 7-6 16-1 7 5 6 13-2 9-12 10-4 0-8-2z" fill="#20323c" stroke="#25d366" stroke-width="3"/><path d="M10 9q2-3 4 1l1 3-2 2q2 4 6 5l2-2 4 2q0 4-5 4-9-2-11-11 0-2 1-4z" fill="#25d366"/></svg><b>1</b></button>
        <button aria-label="Telegram"><svg viewBox="0 0 32 32"><circle cx="16" cy="16" r="14" fill="#2aa1de"/><path d="m6 16 18-7-3 15-6-4-3 3v-5l8-6-10 5z" fill="#fff"/></svg></button>
        <button aria-label="Chrome"><svg viewBox="0 0 32 32"><circle cx="16" cy="16" r="15" fill="#fbc116"/><path d="M3 8.500A15 15 0 0 1 29 8.500H16L9.500 20z" fill="#e33b2e"/><path d="M3 8.500A15 15 0 0 0 16 31l6.500-11.500h-13z" fill="#2da94f"/><circle cx="16" cy="16" r="7.5" fill="#fff"/><circle cx="16" cy="16" r="6" fill="#4285f4"/></svg></button>
        <button class="run" aria-label="V"><svg viewBox="0 0 32 32"><circle cx="16" cy="16" r="14" fill="#153f58" stroke="#2f8cbd" stroke-width="2"/><path d="M9 8h5l2 10 4-10h5l-8 17h-4L12 11z" fill="#fff"/></svg></button>
        <button class="run" aria-label="Matrix"><svg viewBox="0 0 32 32"><use href="#mlogo" width="30" height="30" x="1" y="1"/></svg></button>
      </div>
      <div class="weather"><svg viewBox="0 0 32 32"><path d="M6 17q0 13 13 13 7-1 10-7-14 3-14-10-7-1-9 4z" fill="#f79a1e"/><path d="M1 12q0-5 5-5 2-6 7-5 6 0 6 7 3 1 2 5H4q-3 0-3-2z" fill="#a9c9f7"/><path d="M13 24q0-4 4-4 2-5 7-4 4 1 4 5 4 1 3 6H16q-3 0-3-3z" fill="#cfe2ff"/><circle cx="23" cy="7" r="7" fill="#c42b1c"/><text x="23" y="11" text-anchor="middle">3</text></svg><span>25°C</span><span>Partly cloudy</span></div>
      <div class="tray-icons">
        <svg viewBox="0 0 22 22"><path d="m4 14 7-7 7 7"/></svg>
        <svg viewBox="0 0 22 22"><path d="M2 5 18 2v16L2 20zM7 10q4-5 7 0M14 13q-3 5-7 1"/><circle cx="17" cy="18" r="4" fill="#ff9a0a" stroke="none"/></svg>
        <svg viewBox="0 0 22 22"><path d="M7 6h13v10H5v-6M20 9h1v4M2 3v3q0 3 3 3M1 6h6V3"/></svg>
        <svg viewBox="0 0 22 22"><path d="M3 19Q4 5 18 4M7 19q1-10 11-11M11 19q1-6 7-7"/><circle cx="17" cy="18" r="1" fill="#fff"/></svg>
        <svg viewBox="0 0 22 22"><path d="M2 8h3l5-4v14l-5-4H2zM13 8q2 3 0 6"/><path d="M16 5q4 6 0 12M19 3q5 8 0 16" opacity=".5"/></svg>
      </div>
      <span class="lang">ENG</span>
      <div class="clock">7:26 PM<br>10/15/2025</div>
      <div class="notes"><svg viewBox="0 0 22 22"><path d="M1 1h20v16h-9l-4 4v-4H1z" fill="#fff"/><path d="M4 5h14M4 9h14M4 13h9" stroke="#1a2a45" stroke-width="1.5"/></svg><b>9</b></div>
    </div>

    <script>
      // name, color, visible
      const mainLayers = [
        [["Metal 01", "#00784c", 1], ["Metal 02", "#3cb85c", 1], ["Metal 03", "#80f470", 1], ["Metal 04", "#b8ffb0", 0]],
        [["User 01", "#ff0000", 0], ["User 02", "#00ff00", 1], ["User 03", "#0000ff", 1], ["User 04", "#7c7c7a", 0]],
        [["Gem 01", "#003a9c", 1], ["Gem 02", "#3c70cc", 0], ["Gem 03", "#78b0f8", 0], ["Gem 04", "#a8ccff", 0]],
        [["Heads", "#7010a0", 0], ["Finger", "#a83438", 1], ["Cutting", "#ff7400", 1], ["Creation", "#ffb818", 1]],
      ];
      const userLayers = [
        [["User 18", "#f0a860", 1], ["User 25", "#a8fff0", 1], ["User 27", "#00b8b0", 1], ["User 28", "#007c7c", 1]],
        [["User 29", "#e8d4b0", 1], ["User 32", "#684404", 0], ["User 23", "#00f090", 0], ["User 24", "#408828", 0]],
        [["User 26", "#1c1068", 0], ["User 30", "#18c8f0", 1], ["User 31", "#d0ac40", 1], ["User 28", "#d8a010", 1]],
        [["User 29", "#d8d0f0", 1], ["User 30", "#c060f0", 1], ["User 31", "#ffe8f4", 1], ["User 32", "#005424", 0]],
      ];

      function row([name, color, on]) {
        return `<div class="layer"><span class="name">${name}</span><div class="ctl">
          <button class="play" aria-label="Expand"></button>
          <button class="swatch" aria-label="Color" style="background-color: ${color}"></button>
          <button class="lock" aria-label="Lock"><svg><use href="#lock"/></svg></button>
          <button class="toggle${on ? "" : " off"}" aria-label="Visible"></button></div></div>`;
      }

      function groups(list) {
        return list.map((g) => `<div class="group"><div>${g.map(row).join("")}</div><i class="bar"></i></div>`).join("");
      }

      document.querySelector("#lights").innerHTML = row(["Lights", "#ffffff", 1]);
      document.querySelector("#mainLayers").innerHTML = groups(mainLayers);
      document.querySelector("#userLayers").innerHTML = groups(userLayers);

      // bracelet links: joints between them, and the color of each one
      const joints = [372, 431, 489, 548, 609, 666, 726, 787, 846, 905, 965, 1023, 1082, 1143, 1201, 1260, 1321, 1379, 1439, 1500, 1557, 1616, 1677, 1735, 1795, 1855, 1912];
      const cyan = { face: "#4af2ff", edge: "#1cc8ec", mid: "#0a93b2", dark: "#063a44" };
      const blue = { face: "#3636ff", edge: "#0000f0", mid: "#0000c0", dark: "#00003c" };
      const red = { face: "#d46c6f", edge: "#a23a3d", mid: "#84302f", dark: "#1e0505" };

      const links = joints.slice(0, -1).map((a, i) => {
        const b = joints[i + 1];
        const c = i < 7 || i > 15 ? cyan : i > 9 && i < 13 ? red : blue;
        return `<path d="M${a} 385 ${a + 6} 371H${b - 6}L${b} 385V855L${b - 6} 869H${a + 6}L${a} 855z" fill="${c.edge}"/>
          <path d="M${a + 5} 380V858M${a + 8} 374H${b - 8}" stroke="${c.mid}" stroke-width="2"/>
          <path d="M${b - 5} 378V860" stroke="${c.dark}" stroke-width="3"/>
          <path d="M${a + 8} 865H${b - 7}" stroke="${c.dark}" stroke-width="2"/>
          <path d="M${a + 8} 377H${b - 8}V862H${a + 8}z" fill="${c.face}"/>`;
      });
      document.querySelector("#links").innerHTML = links.join("");
    </script>
  </body>
</html>
```
FILE: styles.css
```css
* {
  box-sizing: border-box;
}
body {
  margin: 0;
  height: 100vh;
  display: flex;
  flex-direction: column;
  overflow: hidden;
  font-family: "Liberation Sans", Arial, sans-serif;
  background-color: #f0f4f7;
}
button,
input,
select {
  font: inherit;
  color: inherit;
  margin: 0;
  padding: 0;
  border: 0;
  background: none;
}
svg {
  display: block;
  flex: none;
}
.defs {
  position: absolute;
}

/* title bar and menu */
.titlebar {
  height: 29px;
  flex: none;
  display: flex;
  align-items: center;
  gap: 5px;
  padding-left: 2px;
  background-color: #fff;
}
.logo {
  width: 20px;
  height: 20px;
}
.title {
  font: 14px "Open Sans", sans-serif;
  color: #949494;
}
.win-buttons {
  margin-left: auto;
  display: flex;
}
.win-buttons button {
  width: 58px;
  height: 29px;
  padding-left: 20px;
}
.win-buttons svg {
  width: 12px;
  height: 12px;
  fill: none;
  stroke: #777;
}
.menubar {
  height: 27px;
  flex: none;
  display: flex;
  gap: 16px;
  padding-left: 3px;
  font-size: 13px;
  color: #111;
  background-color: #e8eaeb;
}

/* recorder */
.recorder {
  position: absolute;
  left: 827px;
  top: 14px;
  width: 580px;
  height: 54px;
  padding: 1px 0 0;
  background-color: #171b28;
  border: 1px solid #3a4650;
  z-index: 5;
}
.rec-top {
  display: flex;
  justify-content: flex-end;
  gap: 3px;
  height: 16px;
}
.rec-top svg {
  width: 16px;
  height: 16px;
}
.rec-row {
  display: flex;
  align-items: center;
  gap: 2px;
  height: 20px;
  padding-left: 8px;
}
.rec-row button {
  width: 36px;
  height: 36px;
  display: grid;
  place-items: center;
}
.rec-row button svg {
  width: 22px;
  height: 22px;
}
.rec-row .rec-round {
  border-radius: 18px;
  background-color: #2a2d3b;
}
.timer {
  width: 122px;
  height: 20px;
  margin: 0 13px;
}

.main {
  flex: 1;
  min-height: 0;
  display: flex;
}

/* side panel */
.panel {
  width: 375px;
  flex: none;
  overflow: hidden;
  background-color: #363432;
  color: #e2ddd0;
  font-family: "DejaVu Sans", Verdana, sans-serif;
  font-size: 14px;
  border-right: 1px solid #777;
}
.head {
  height: 18px;
  margin: 0;
  padding: 0 3px 0 5px;
  display: flex;
  justify-content: space-between;
  font-size: 14px;
  line-height: 16px;
  color: #0c0c0c;
  background: linear-gradient(#bdbbb0, #a5a39a);
  border-top: 1px solid #8d8b84;
}
.close {
  width: 14px;
  height: 14px;
  margin-top: 1px;
  border: 1px solid #86847c;
  background:
    linear-gradient(45deg, transparent 46%, #c24a4a 46% 54%, transparent 54%),
    linear-gradient(-45deg, transparent 46%, #c24a4a 46% 54%, transparent 54%),
    #c6c2b8;
}
.history {
  height: 35px;
  display: flex;
  align-items: center;
  gap: 6px;
  padding: 0 1px 1px 2px;
  background-color: #646464;
}
.history svg {
  width: 28px;
  height: 28px;
}
.arrows {
  margin-left: auto;
  display: flex;
  gap: 2px;
}
.arrows button {
  width: 31px;
  height: 31px;
  display: grid;
  place-items: center;
  border: 2px solid #2c2c2c;
  background-color: #585858;
}
.arrows svg {
  width: 20px;
  height: 20px;
}
.mm-tabs {
  height: 20px;
  display: flex;
  gap: 10px;
  padding-right: 22px;
  background-color: #241f1c;
}
.mm-tabs .on {
  color: #5048c8;
}
.last {
  margin-left: auto;
}
.cats {
  height: 43px;
  padding-left: 2px;
}
.cats div {
  display: flex;
  height: 21px;
  white-space: nowrap;
}
.cats button {
  display: flex;
  align-items: center;
  gap: 2px;
  padding-right: 3px;
}
.dot {
  width: 11px;
  height: 11px;
  border-radius: 6px;
  background-image: radial-gradient(circle at 35% 30%, #fff, transparent 50%, #0007);
}
.gold { background-color: #d8a820; }
.green { background-color: #108850; }
.violet { background-color: #9020e8; }
.red { background-color: #f03c10; }
.yellow { background-color: #dcdc20; }
.crimson { background-color: #c81820; }
.indigo { background-color: #5c40e0; }
.blue { background-color: #3070c0; }
.magenta { background-color: #c018c0; }
.orange { background-color: #f06c10; }
.teal { background-color: #10a898; }

.tools {
  display: grid;
  grid-template-columns: repeat(11, 1fr);
  justify-items: center;
  align-items: center;
  row-gap: 4px;
  height: 69px;
  padding: 4px 4px 2px 0;
  background-color: #656565;
}
.tools svg {
  width: 27px;
  height: 27px;
  fill: none;
  stroke: #dedede;
  stroke-width: 1.3;
}
.tools .pt {
  fill: #fff;
  stroke: #6f98e8;
}
.tools.edit {
  height: 38px;
  padding: 0 4px 4px 0;
  background-color: #333;
}

/* display */
.display {
  height: 60px;
  display: flex;
  gap: 2px;
  padding: 4px 4px 3px 1px;
}
.disp-col {
  width: 192px;
  display: flex;
  flex-direction: column;
}
.disp-icons {
  height: 33px;
  display: flex;
  align-items: center;
  gap: 3px;
  padding: 0 0 2px 2px;
}
.disp-icons button {
  width: 28px;
  height: 28px;
  background-color: #4c4a48;
}
.disp-icons .on {
  background-color: #6d99f0;
}
.disp-icons .lit {
  outline: 2px solid #b9d0f8;
  outline-offset: -2px;
}
.disp-icons svg {
  width: 28px;
  height: 28px;
}
.disp-col.mat {
  width: 153px;
  border: 1px solid #999;
}
.mat .disp-icons {
  background-color: #555350;
}
.mat .disp-icons button {
  width: 27px;
  background: none;
}
.mat .disp-icons .on {
  background: #6d99f0;
}
.mat .disp-icons svg {
  width: 27px;
}
.display select {
  appearance: none;
  height: 19px;
  padding-left: 3px;
  font-size: 12px;
  color: #85827c;
  border: 1px solid #777;
  background:
    linear-gradient(45deg, transparent 45%, #777 45% 60%, transparent 60%) right 10px center / 5px 5px no-repeat,
    linear-gradient(-45deg, transparent 45%, #777 45% 60%, transparent 60%) right 6px center / 5px 5px no-repeat,
    #201f1e;
}

.toggle {
  width: 32px;
  height: 17px;
  border: 2px solid #4a6cb0;
  border-width: 2px 2px 2px 3px;
  border-color: #8cb0ff #c8d4f0 #c8d4f0 #5478c8;
  background: linear-gradient(#000, #000) center / 3px 9px no-repeat #6a96f8;
}
.toggle.off {
  border-color: #777 #bbb #bbb #444;
  background: radial-gradient(circle, transparent 3px, #7a86d8 4px, transparent 5px) center #565656;
}
.toggle.tall {
  width: 21px;
  height: 51px;
}

/* snaps */
.snaps {
  height: 36px;
  display: flex;
  align-items: center;
  gap: 3px;
  padding: 0 7px 0 2px;
}
.snaps button {
  width: 30px;
  height: 30px;
  border: 2px solid;
  border-color: #777 #555 #555 #777;
  background-color: #4e4d4c;
}
.snaps .on {
  background-color: #5c7cc0;
}
.snaps svg {
  width: 26px;
  height: 26px;
  fill: none;
  stroke: #8d9094;
  stroke-width: 1.5;
}
.snaps circle {
  fill: url(#ballSnap);
  stroke: none;
}
.snaps .ring {
  fill: none;
  stroke: #8d9094;
}
.snaps .snap-all {
  width: 62px;
  margin-left: auto;
  display: grid;
  place-items: center;
}
.snap-all span {
  width: 20px;
  height: 20px;
  line-height: 18px;
  font-size: 13px;
  color: #6c78c8;
  border: 1px solid #999;
}
.snaps.second {
  height: 40px;
  padding: 0 4px 0 4px;
  background-color: #636363;
}
.trio {
  display: flex;
}
.trio button {
  border-color: #222 #999 #999 #222;
}
.trio svg {
  stroke: #ddd;
}
.trio text {
  fill: #000;
  stroke: none;
}
.trio .b {
  stroke: #223cb0;
  stroke-width: 2;
}
.trio .r {
  stroke: #c22;
  stroke-width: 2;
}
.steps {
  flex: 1;
  display: flex;
  margin-left: 3px;
}
.snaps .steps button {
  flex: 1;
  width: auto;
  height: 20px;
  line-height: 16px;
  font-size: 13px;
  color: #a09e98;
  border-color: #222 #222 #999;
}
.snaps .steps .on {
  color: #90a8e0;
}
.snaps .grid {
  margin-left: -3px;
  border-color: #222 #bbb #bbb #222;
}
.grid svg {
  stroke: #000;
  stroke-width: 2;
}

/* info & settings */
.info {
  height: 75px;
  display: flex;
}
.info-left {
  width: 241px;
  display: grid;
  grid-template-columns: repeat(7, 32px);
  align-content: center;
  gap: 9px 0;
  padding-left: 3px;
}
.info-left svg {
  width: 30px;
  height: 28px;
}
.info-right {
  flex: 1;
  display: grid;
  grid-template-columns: repeat(4, 30px);
  grid-auto-rows: 30px;
  justify-content: space-between;
  align-content: center;
  gap: 7px 1px;
  padding: 0 3px 0 4px;
  background: linear-gradient(#363432 3px, #686868 3px 38px, #363432 38px);
}
.info-right button {
  border: 1px solid;
  border-color: #111 #bbb #bbb #111;
  background-color: #585858;
}
.info-right .on {
  background-color: #5f8ce8;
}
.info-right .flat {
  border-color: transparent;
  background: none;
}
.info-right svg {
  width: 28px;
  height: 28px;
}

/* layers */
.layers {
  height: 402px;
  padding-top: 7px;
}
.layers-top {
  display: flex;
  justify-content: space-between;
  height: 23px;
  padding: 0 19px 0 4px;
}
.show-hide {
  display: flex;
  gap: 12px;
}
.show-hide button {
  height: 18px;
  display: flex;
  align-items: center;
  gap: 8px;
  padding: 0 4px 0 3px;
  font-size: 12px;
  border: 1px solid;
  border-color: #999 #222 #ccc #999;
  background-color: #4e4c4a;
}
.show-hide svg {
  width: 22px;
  height: 14px;
}
.layer {
  display: flex;
  height: 20px;
}
.name {
  width: 60px;
  height: 17px;
  margin-right: 3px;
  padding-left: 1px;
  line-height: 15px;
  white-space: nowrap;
  border-bottom: 1px solid #0e0d0c;
}
#lights .name {
  height: 16px;
  padding-left: 2px;
  background-color: #6a96f8;
}
.ctl {
  display: flex;
  height: 19px;
  padding: 1px;
  background-color: #111;
  border-bottom: 1px solid #aaa;
}
.play {
  width: 18px;
  border: 1px solid #777;
  background: #4c4a48;
}
.play::before {
  content: "";
  display: block;
  margin-left: 6px;
  width: 5px;
  height: 10px;
  background-color: #fff;
  clip-path: polygon(0 0, 100% 50%, 0 100%);
}
.swatch {
  width: 28px;
  border: 1px solid;
  border-color: #fff4 #0004 #0004 #fff4;
}
.lock {
  width: 22px;
  display: grid;
  place-items: center;
  border: 1px solid #777;
  border-right: 2px solid #222;
  background-color: #5c5a58;
}
.lock svg {
  width: 11px;
  height: 13px;
}
.groups {
  display: grid;
  grid-template-columns: 180px 180px;
  gap: 7px;
}
.group {
  display: flex;
  gap: 2px;
  padding-left: 4px;
}
.bar {
  width: 8px;
  background: linear-gradient(90deg, #86a8f0, #5a84e0 60%, #3860b8);
}
.divider {
  height: 28px;
  padding: 5px 46px;
  background: linear-gradient(#0c0c0c, #0c0c0c) center 12px / 283px 2px no-repeat;
}
.divider button {
  display: block;
  width: 16px;
  height: 16px;
  margin: 0 auto;
  border-radius: 8px;
  background-color: #7a7977;
  border: 1px solid #333;
}
.divider svg {
  width: 14px;
  height: 14px;
}

/* projects */
.projects {
  display: flex;
  border-top: 3px solid #555;
}
.profile {
  width: 98px;
  flex: none;
  margin: 2px 0 0 2px;
  padding: 0;
  list-style: none;
  font-size: 12px;
}
.profile li {
  padding-left: 3px;
  line-height: 15px;
  background: linear-gradient(#4470c0 15px, transparent 15px);
}
.profile-bar {
  width: 20px;
  flex: none;
  margin-right: 4px;
  border-right: 2px solid #111;
}
.profile-bar i {
  display: block;
  width: 12px;
  height: 14px;
  margin-top: 3px;
  background-color: #777;
  border-top: 4px solid #aaa;
}
.project {
  flex: none;
  width: 98px;
  height: 40px;
  margin: 5px 2px 0 0;
  padding-left: 5px;
  display: flex;
  align-items: flex-start;
  justify-content: space-between;
  color: #fff;
  font-size: 14px;
  background-color: #000;
  border: 1px solid #666;
}
.project svg {
  width: 40px;
  height: 28px;
}
.project .play {
  height: 16px;
}

/* work area */
.work {
  flex: 1;
  min-width: 0;
  display: flex;
  flex-direction: column;
  padding: 9px 11px 5px;
  background-color: #f1f4f7;
  border-top: 1px solid #fff;
  border-bottom: 2px solid #8c9296;
}
.command {
  padding: 2px 0 0 4px;
  font-size: 16px;
  color: #14201a;
  border-left: 2px solid #8a9490;
}
.log {
  display: flex;
}
.log p {
  flex: 1;
  margin: 0;
  height: 48px;
  padding: 1px 0 0 1px;
  line-height: 20px;
  background-color: #84b48e;
}
.scroll {
  width: 21px;
  display: flex;
  flex-direction: column;
  justify-content: space-between;
  padding: 8px 4px 7px;
  background-color: #f0f0f0;
}
.scroll svg {
  width: 12px;
  height: 8px;
  fill: none;
  stroke: #555;
  stroke-width: 2;
}
.prompt {
  height: 25px;
  display: flex;
  background-color: #84b48e;
  border-top: 1px solid #445a48;
}
.prompt label {
  padding-left: 1px;
  line-height: 22px;
  font-weight: bold;
}
.prompt input {
  flex: 1;
  padding-left: 6px;
  outline: none;
}
.spin {
  width: 21px;
  display: grid;
  gap: 2px;
  padding: 1px 2px;
  background-color: #e8ecec;
}
.spin button {
  height: 10px;
  display: grid;
  place-items: center;
  border: 1px solid #aaa;
}
.spin svg {
  width: 8px;
  height: 6px;
}

.view-tabs {
  position: relative;
  z-index: 0;
  height: 34px;
  flex: none;
  display: flex;
  align-items: flex-end;
  font-size: 15px;
  color: #222;
  background-color: #d8e0df;
  border-bottom: 1px solid #444;
}
.view-tabs button {
  position: relative;
  height: 25px;
  margin-left: 11px;
  padding: 0 6px 4px 1px;
  border: 1px solid #555;
  border-width: 1px 1px 0 0;
  border-radius: 0 5px 0 0;
  background-color: #dce8ec;
}
.view-tabs button::before {
  content: "";
  position: absolute;
  left: -6px;
  top: -1px;
  width: 12px;
  height: 25px;
  border: 1px solid #555;
  border-width: 1px 0 0 1px;
  background-color: inherit;
  transform: skewX(-25deg);
  z-index: -1;
}
.view-tabs .on {
  padding-left: 5px;
  background-color: #84b48e;
}
.view-tabs .add {
  padding: 0 10px 0 7px;
  background-color: #d8e0df;
}
.add svg {
  width: 12px;
  height: 12px;
}

.viewport {
  position: relative;
  flex: 1;
  min-height: 0;
  background-color: #000;
}
.scene {
  width: 100%;
  height: 100%;
}
.dim text {
  font-size: 96px;
  fill: #fff;
  stroke: #fff;
  stroke-width: 2;
}
.axis {
  font-size: 16px;
}
.view-title {
  position: absolute;
  left: 0;
  top: 0;
  height: 22px;
  display: flex;
  align-items: center;
  gap: 10px;
  padding-left: 10px;
  font-size: 15px;
  color: #1c2a20;
  background-color: #84b48e;
}
.view-title svg {
  width: 13px;
  height: 20px;
  padding: 0 1px 0 2px;
  border-left: 1px solid #222;
}

.osnaps {
  height: 38px;
  flex: none;
  display: flex;
  align-items: center;
  gap: 10px;
  padding: 6px 0 0 8px;
  font-size: 13px;
  color: #85898a;
  background-color: #d9dedf;
  border-left: 4px double #999;
}
.osnaps label {
  display: flex;
  align-items: center;
  gap: 7px;
}
.osnaps input {
  appearance: none;
  width: 15px;
  height: 15px;
  border: 1px solid #ccc;
  background-color: #fff;
}
.osnaps input:checked::before {
  content: "";
  display: block;
  width: 4px;
  height: 8px;
  margin: 1px 0 0 4px;
  border: solid #aaa;
  border-width: 0 1px 1px 0;
  transform: rotate(40deg);
}
.osnaps .gray {
  width: 17px;
  height: 17px;
  background-color: #c8c8c8;
  border-color: #bbb;
}
.osnaps .active {
  gap: 5px;
  color: #111;
}
.osnaps .active .gray {
  background: #909090;
  border: 2px solid #3c78b4;
  outline: 1px solid #cde;
  outline-offset: -3px;
}

.status {
  height: 26px;
  flex: none;
  display: flex;
  font-size: 16px;
  color: #222;
  background-color: #d9dedf;
  border-top: 2px solid #777;
}
.status button {
  padding: 0 10px;
  border-right: 1px solid #444;
  white-space: nowrap;
}
.status .cplane {
  width: 69px;
  padding: 0;
}
.status .coord {
  width: 110px;
}
.status .current {
  flex: 1;
  display: flex;
  align-items: center;
  gap: 2px;
  padding: 0 3px;
}
.current i {
  width: 18px;
  height: 17px;
  background-color: #fff;
  border: 2px solid #333;
}
.status .on {
  font-weight: bold;
  background-color: #edf4f9;
}
.status .tight {
  padding: 0 5px;
  margin-right: 7px;
}

.activate {
  position: absolute;
  right: 83px;
  bottom: 98px;
  width: 283px;
  display: grid;
  font-family: "Open Sans", sans-serif;
  white-space: nowrap;
}
.activate strong {
  font-size: 24px;
  line-height: 32px;
  font-weight: normal;
  color: #6c6c6c;
}
.activate span {
  font-size: 17px;
  line-height: 26px;
  color: #b4b9ba;
}

/* taskbar */
.taskbar {
  height: 50px;
  flex: none;
  display: flex;
  align-items: center;
  color: #fff;
  font-family: "Open Sans", sans-serif;
  background: linear-gradient(90deg, #20333b, #20333f 60%, #1a2844 85%, #16203c);
}
.start {
  width: 60px;
  height: 50px;
  padding-left: 20px;
}
.start svg {
  width: 20px;
  height: 20px;
}
.search {
  width: 359px;
  height: 50px;
  display: flex;
  align-items: center;
  gap: 14px;
  padding-left: 14px;
  color: #333;
  background-color: #f2f2f2;
}
.glass {
  width: 22px;
  height: 22px;
}
.search input {
  width: 198px;
  font-size: 18px;
  outline: none;
}
.search input::placeholder {
  color: #333;
  opacity: 1;
}
.pie {
  width: 92px;
  height: 40px;
}
.apps {
  display: flex;
}
.apps button {
  position: relative;
  width: 52px;
  height: 50px;
  margin-right: 10px;
  padding-left: 11px;
}
.apps button:first-child {
  margin-right: 12px;
  width: 57px;
  padding-left: 15px;
}
.apps svg {
  width: 30px;
  height: 30px;
}
.apps .run {
  border-bottom: 3px solid #76b0e8;
  padding-top: 3px;
}
.apps b,
.notes b {
  position: absolute;
  right: 0;
  bottom: 6px;
  width: 20px;
  height: 20px;
  border-radius: 10px;
  border: 1px solid #aaa;
  background-color: #22303a;
  font-size: 13px;
  line-height: 18px;
  font-weight: normal;
  text-align: center;
}
.apps .w {
  font: bold 17px "Liberation Serif", serif;
  fill: #f0b630;
}
.weather {
  margin-left: auto;
  display: flex;
  align-items: center;
  gap: 10px;
  font-size: 17px;
}
.weather svg {
  width: 30px;
  height: 30px;
}
.weather text {
  font-size: 12px;
  fill: #fff;
}
.tray-icons {
  display: flex;
  gap: 8px;
  margin: 0 11px 0 29px;
}
.tray-icons svg {
  width: 22px;
  height: 22px;
  fill: none;
  stroke: #fff;
  stroke-width: 1.3;
}
.lang {
  font-size: 14px;
}
.clock {
  margin: 0 19px 0 13px;
  font-size: 14px;
  line-height: 23px;
  text-align: center;
}
.notes {
  position: relative;
  width: 52px;
}
.notes svg {
  width: 22px;
  height: 22px;
}
.notes b {
  right: 21px;
  bottom: -10px;
}
```
